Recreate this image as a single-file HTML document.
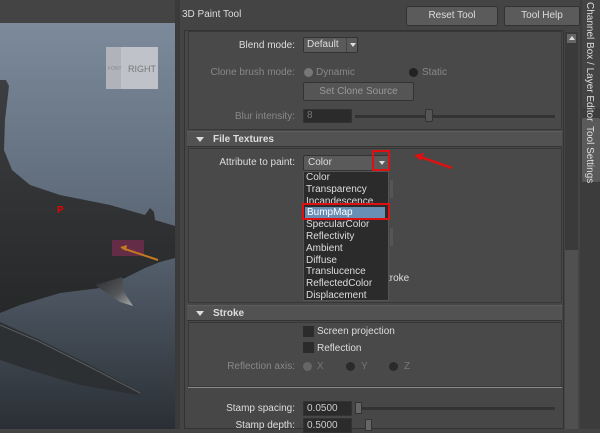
<!DOCTYPE html>
<html><head><style>
*{margin:0;padding:0;box-sizing:border-box}
body{width:600px;height:429px;overflow:hidden;background:#444;font-family:"Liberation Sans",sans-serif;font-size:10px;color:#ddd;position:relative}
.a{position:absolute}
.lbl{position:absolute;text-align:right;width:120px;left:175px}
.btn{position:absolute;background:#5b5b5b;border:1px solid #333;border-radius:2px;color:#ddd;text-align:center;font-size:10px}
.fld{position:absolute;background:#2b2b2b;border:1px solid #333;color:#ccc;padding-left:3px;font-size:10px}
.hdr{position:absolute;left:187px;width:375px;height:16px;background:#525252;border-top:1px solid #5c5c5c;border-bottom:1px solid #333;font-weight:bold;color:#ddd;font-size:10px;line-height:15px;padding-left:26px}
.hdr:before{content:"";position:absolute;left:9px;top:5px;border-left:4px solid transparent;border-right:4px solid transparent;border-top:5px solid #ddd}
.rad{position:absolute;width:9px;height:9px;border-radius:50%;background:#2a2a2a}
.cb{position:absolute;width:11px;height:11px;background:#2b2b2b}
.list div{height:11.8px;line-height:11.8px;padding-left:2px}
</style></head><body>
<svg class="a" style="left:0;top:0" width="176" height="429">
<defs><linearGradient id="g" x1="0" y1="0" x2="0" y2="1"><stop offset="0" stop-color="#7c8a9b"/><stop offset="0.5" stop-color="#5c6876"/><stop offset="1" stop-color="#2a2f35"/></linearGradient>
<linearGradient id="s" x1="0" y1="0" x2="0" y2="1"><stop offset="0" stop-color="#3c3e41"/><stop offset="1" stop-color="#262829"/></linearGradient>
<linearGradient id="f" x1="0" y1="0" x2="1" y2="1"><stop offset="0" stop-color="#2a2c2e"/><stop offset="0.6" stop-color="#55585b"/><stop offset="1" stop-color="#aaa"/></linearGradient></defs>
<rect x="0" y="23" width="176" height="406" fill="url(#g)"/>
<rect x="0" y="0" width="176" height="23" fill="#444"/>
<path d="M0,80 L6,80 L9,86 L5,120 L4,150 L12,170 L30,185 L60,195 L110,205 L145,215 L150,208 L154,212 L155,220 L175,226 L175,258 L160,262 L145,268 L125,278 L100,288 L60,293 L20,305 L0,313 Z" fill="url(#s)"/>
<path d="M95,285 L122,277 L124,292 L133,306 L120,302 L108,294 Z" fill="url(#f)"/>
<path d="M0,322 L40,340 L90,365 L140,392 L138,395 L80,385 L30,370 L0,360 Z" fill="#2d3033"/>
<path d="M0,325 L40,342 L90,367 L140,393" stroke="#5a5d60" stroke-width="1" fill="none"/>
<rect x="112" y="240" width="32" height="16" fill="#8a2b55" opacity="0.6"/>
<path d="M158,260 L122,248" stroke="#c07a20" stroke-width="2"/>
<path d="M120,247 L127,245 L126,251 Z" fill="#c07a20"/>
<text x="57" y="213" fill="#e00" font-size="10" font-weight="bold" font-family="Liberation Sans">P</text>
<rect x="106" y="47" width="52" height="42" fill="#bfc3c9"/>
<rect x="106" y="47" width="15" height="42" fill="#b0b4ba"/>
<text x="128" y="72" fill="#777" font-size="9" font-family="Liberation Sans">RIGHT</text>
<text x="108" y="70" fill="#888" font-size="5" font-family="Liberation Sans">FONT</text>
</svg>
<div class="a" style="left:175px;top:0;width:5px;height:429px;background:#3a3a3a"></div>
<div class="a" style="left:182px;top:9px;color:#ddd">3D Paint Tool</div>
<div class="btn" style="left:406px;top:6px;width:92px;height:20px;line-height:18px">Reset Tool</div>
<div class="btn" style="left:504px;top:6px;width:76px;height:20px;line-height:18px">Tool Help</div>
<div class="a" style="left:184px;top:30px;width:380px;height:399px;background:#474747;border:1px solid #333"></div>
<div class="a" style="left:188px;top:31px;width:374px;height:99px;border:1px solid #383838;background:#494949"></div>
<div class="lbl" style="top:40px">Blend mode:</div>
<div class="btn" style="left:303px;top:37px;width:55px;height:16px;line-height:14px;text-align:left;padding-left:3px;background:#5a5a5a">Default<span style="position:absolute;left:42px;top:0;width:1px;height:14px;background:#444"></span><span style="position:absolute;left:46px;top:5px;border-left:3px solid transparent;border-right:3px solid transparent;border-top:4px solid #ddd"></span></div>
<div class="lbl" style="top:67px;color:#888">Clone brush mode:</div>
<div class="rad" style="left:304px;top:68px;background:#777"></div>
<div class="a" style="left:316px;top:67px;color:#888">Dynamic</div>
<div class="rad" style="left:409px;top:68px;background:#222"></div>
<div class="a" style="left:422px;top:67px;color:#888">Static</div>
<div class="btn" style="left:303px;top:82px;width:111px;height:19px;line-height:17px;color:#999;background:#555">Set Clone Source</div>
<div class="lbl" style="top:111px;color:#888">Blur intensity:</div>
<div class="fld" style="left:303px;top:109px;width:49px;height:14px;color:#777;line-height:12px">8</div>
<div class="a" style="left:355px;top:115px;width:200px;height:3px;background:#333"></div>
<div class="a" style="left:425px;top:109px;width:8px;height:13px;background:#555;border:1px solid #333;border-radius:2px"></div>
<div class="hdr" style="top:131px">File Textures</div>
<div class="a" style="left:188px;top:148px;width:374px;height:155px;border:1px solid #383838;background:#494949"></div>
<div class="lbl" style="top:157px">Attribute to paint:</div>
<div class="btn" style="left:303px;top:155px;width:87px;height:16px;line-height:14px;text-align:left;padding-left:4px;background:#5a5a5a">Color<span style="position:absolute;left:75px;top:5px;border-left:3px solid transparent;border-right:3px solid transparent;border-top:4px solid #ddd"></span></div>
<div class="a" style="left:372px;top:150px;width:18px;height:21px;border:2px solid #e01010"></div>
<div class="a" style="left:387px;top:273px;color:#ddd">troke</div>
<div class="a list" style="left:303px;top:171px;width:86px;height:130px;background:#2b2b2b;border:1px solid #555;color:#ddd;font-size:10px">
<div>Color</div><div>Transparency</div><div>Incandescence</div><div style="background:#6a8fb5;color:#fff;margin:0 3px 0 1px">BumpMap</div><div>SpecularColor</div><div>Reflectivity</div><div>Ambient</div><div>Diffuse</div><div>Translucence</div><div>ReflectedColor</div><div>Displacement</div></div>
<div class="a" style="left:302px;top:203px;width:88px;height:17px;border:2px solid #e01010"></div>
<div class="a" style="left:390px;top:180px;width:3px;height:18px;background:#555"></div>
<div class="a" style="left:390px;top:228px;width:3px;height:18px;background:#555"></div>
<svg class="a" style="left:400px;top:145px" width="60" height="30"><path d="M52,23 L18,11" stroke="#e01010" stroke-width="2.5"/><path d="M14,10 L24,8 L21,16 Z" fill="#e01010"/></svg>
<div class="hdr" style="top:305px">Stroke</div>
<div class="a" style="left:188px;top:322px;width:374px;height:65px;border:1px solid #383838;background:#494949"></div>
<div class="cb" style="left:303px;top:326px"></div><div class="a" style="left:317px;top:326px">Screen projection</div>
<div class="cb" style="left:303px;top:342px"></div><div class="a" style="left:317px;top:343px">Reflection</div>
<div class="lbl" style="top:361px;color:#888">Reflection axis:</div>
<div class="rad" style="left:303px;top:362px;background:#666"></div><div class="a" style="left:317px;top:361px;color:#777">X</div>
<div class="rad" style="left:346px;top:362px"></div><div class="a" style="left:361px;top:361px;color:#777">Y</div>
<div class="rad" style="left:389px;top:362px"></div><div class="a" style="left:404px;top:361px;color:#777">Z</div>
<div class="a" style="left:188px;top:387px;width:374px;height:1px;background:#888"></div>
<div class="lbl" style="top:403px">Stamp spacing:</div>
<div class="fld" style="left:303px;top:401px;width:49px;height:15px;line-height:13px">0.0500</div>
<div class="a" style="left:358px;top:407px;width:197px;height:3px;background:#333"></div>
<div class="a" style="left:355px;top:402px;width:7px;height:12px;background:#666;border:1px solid #333"></div>
<div class="lbl" style="top:420px">Stamp depth:</div>
<div class="fld" style="left:303px;top:418px;width:49px;height:15px;line-height:13px">0.5000</div>
<div class="a" style="left:365px;top:419px;width:7px;height:12px;background:#666;border:1px solid #333"></div>
<div class="a" style="left:565px;top:32px;width:13px;height:397px;background:#505050"></div>
<div class="a" style="left:565px;top:32px;width:13px;height:218px;background:#3a3a3a"></div>
<div class="a" style="left:567px;top:34px;width:9px;height:9px;background:#666"></div>
<div class="a" style="left:569px;top:36px;border-left:3px solid transparent;border-right:3px solid transparent;border-bottom:4px solid #ddd"></div>
<div class="a" style="left:580px;top:0;width:20px;height:429px;background:#3c3c3c"></div>
<div class="a" style="left:582px;top:0;width:18px;height:108px;background:#444"></div>
<div class="a" style="left:582px;top:118px;width:18px;height:64px;background:#5a5a5a;border-radius:2px"></div>
<div class="a" style="left:584px;top:2px;writing-mode:vertical-rl;color:#ddd;font-size:10px">Channel Box / Layer Editor</div>
<div class="a" style="left:584px;top:126px;writing-mode:vertical-rl;color:#ddd;font-size:10px">Tool Settings</div>
</body></html>
